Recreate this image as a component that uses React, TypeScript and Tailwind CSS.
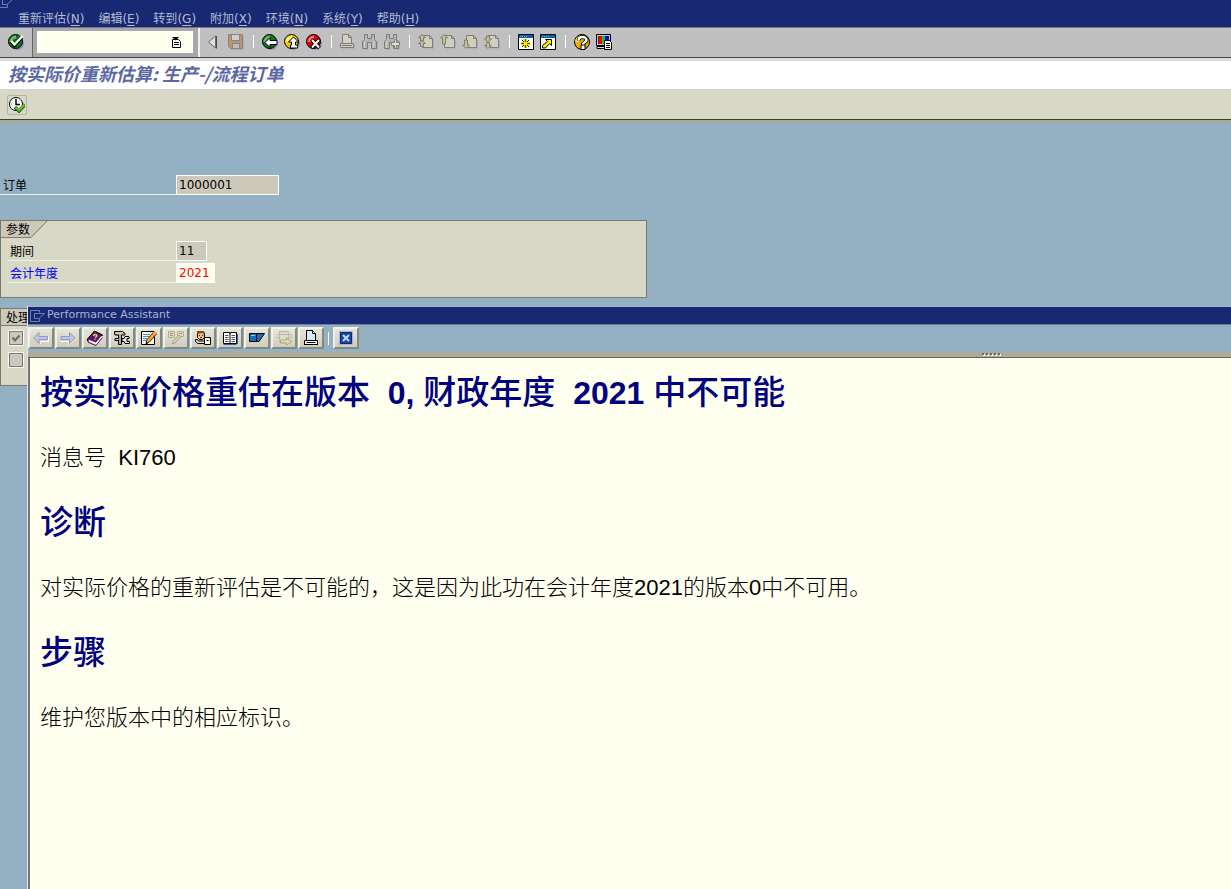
import type { ReactNode } from "react";

type IconProps = { children: ReactNode; className?: string };

function Icon({ children, className = "" }: IconProps) {
  return (
    <svg
      viewBox="0 0 16 16"
      className={`w-4 h-4 shrink-0 ${className}`}
      fill="none"
      aria-hidden="true"
    >
      {children}
    </svg>
  );
}

// ---------- Iconos redondos ----------

function Ball({ color, light, children }: { color: string; light: string; children: ReactNode }) {
  return (
    <Icon>
      <circle cx="9.5" cy="9.5" r="6.5" fill="#8f8fc4" />
      <circle cx="7.5" cy="7.5" r="7" fill={color} stroke="#000" />
      <path d="M3 8a5 5 0 0 1 5-5" stroke={light} strokeWidth="3" />
      {children}
    </Icon>
  );
}

const OkIcon = () => (
  <Ball color="#0f7a1c" light="#6fb56b">
    <path d="M3.5 7.5l3 3.5 7-7.5" stroke="#000" strokeWidth="4" />
    <path d="M3.5 7l3 3.5 8-8.5" stroke="#fff" strokeWidth="2.5" />
  </Ball>
);

const BackIcon = () => (
  <Ball color="#0f7a1c" light="#6fb56b">
    <path d="M3 8.5l5-5v3h7v4H8v3z" fill="#fff" stroke="#000" />
  </Ball>
);

const ExitIcon = () => (
  <Ball color="#f5c400" light="#fff27a">
    <path d="M9.5 3l5 5h-3v3h2v3h-7v-3h1V8h-3z" fill="#fff" stroke="#000" />
  </Ball>
);

const CancelIcon = () => (
  <Ball color="#e00000" light="#ff7070">
    <path d="M5.5 5.5l8 8.5M13.5 5.5l-8 8.5" stroke="#000" strokeWidth="4" />
    <path d="M6 6l7 7.5M13 6l-7 7.5" stroke="#fff" strokeWidth="2" />
  </Ball>
);

const HelpIcon = () => (
  <Icon>
    <circle cx="9" cy="9" r="6.5" fill="#8f8fc4" />
    <circle cx="8" cy="8" r="7.5" fill="#f5a800" stroke="#000" />
    <path d="M2.5 8a6 6 0 0 1 4-5" stroke="#fff27a" strokeWidth="3" />
    <path d="M4.5 6.5c0-4.5 8-4.5 8-.5 0 2.5-3.5 2-3.5 5" stroke="#000" strokeWidth="4" />
    <path d="M7 11h4v4.500H7z" fill="#fff" stroke="#000" />
    <path d="M4.5 6.5c0-4.5 8-4.5 8-.5 0 2.5-3.5 2-3.5 4.5" stroke="#fff" strokeWidth="2.5" />
  </Icon>
);

// ---------- Iconos de la barra ----------

const CollapseIcon = () => (
  <Icon>
    <path d="M10.5 2v12.5" stroke="#4a4a4a" />
    <path d="M9.5 2L2.5 8l7 6z" fill="#dedede" stroke="#6b6b6b" />
  </Icon>
);

const SaveIcon = () => (
  <Icon>
    <path d="M15.5 2v13.5H3" stroke="#aaaacb" />
    <path d="M.5.5h14v14H2.5l-2-2z" fill="#c09468" stroke="#858585" />
    <path d="M3.5.5h8v6h-8z" fill="#cfcfcb" stroke="#858585" />
    <path d="M4.5 9.5h7v5h-7z" fill="#bfbfbf" stroke="#858585" />
  </Icon>
);

const PrintGreyIcon = () => (
  <Icon>
    <path d="M14.5 11v4H2" stroke="#aaaacb" />
    <path d="M2.5.5h6l3 3v6h-9z" fill="#d4d1bd" stroke="#7c7c7c" />
    <path d="M8.5.5v3h3" stroke="#7c7c7c" />
    <path d="M.5 9.5h13v4H.5z" fill="#cfccb8" stroke="#7c7c7c" />
    <path d="M2 11.5h10" stroke="#7c7c7c" />
  </Icon>
);

const binoculars = (
  <>
    <path d="M15.5 6v9H10M5.5 15.5H2" stroke="#aaaacb" />
    <path
      d="M2.5.5h3v4h4v-4h3v5l2 2v7h-5v-6h-4v6h-5v-7l2-2z"
      fill="#b4b4ae"
      stroke="#7c7c7c"
    />
    <path d="M3 5h2M10 5h2M2.5 7.5v6M11.5 7.5v6" stroke="#d4d2c4" />
  </>
);

const FindIcon = () => <Icon>{binoculars}</Icon>;

const FindNextIcon = () => (
  <Icon>
    {binoculars}
    <path d="M10.5 5.5h2v3h3v3h-3v3h-2v-3h-3v-3h3z" fill="#e2dfc4" stroke="#7c7c7c" />
  </Icon>
);

function Page({ children }: { children: ReactNode }) {
  return (
    <Icon>
      <path d="M15.5 6v9H6" stroke="#aaaacb" />
      <path d="M4.5 1.5h7l3 3v9h-10z" fill="#d2cfbb" stroke="#7c7c7c" />
      <path d="M11.5 1.5v3h3" stroke="#7c7c7c" />
      {children}
    </Icon>
  );
}

const FirstPageIcon = () => (
  <Page>
    <path d="M4 .5l3.5 3h-2v3h-3v-3h-2z" fill="#c5c487" stroke="#7c7c7c" />
    <path d="M4 6.5l3.5 3h-2v3h-3v-3h-2z" fill="#c5c487" stroke="#7c7c7c" />
  </Page>
);

const PrevPageIcon = () => (
  <Page>
    <path d="M4 .5L7.5 4h-2v6h-3V4h-2z" fill="#c5c487" stroke="#7c7c7c" />
  </Page>
);

const NextPageIcon = () => (
  <Page>
    <path d="M4 14.5L.5 11h2V6h3v5h2z" fill="#c5c487" stroke="#7c7c7c" />
  </Page>
);

const LastPageIcon = () => (
  <Page>
    <path d="M4 8L.5 5h2V2h3v3h2z" fill="#c5c487" stroke="#7c7c7c" />
    <path d="M4 14.5l-3.5-3h2v-3h3v3h2z" fill="#c5c487" stroke="#7c7c7c" />
  </Page>
);

const windowFrame = (
  <>
    <path d="M.5.5h15v15H.5z" fill="#fffff0" stroke="#000" />
    <path d="M1 1h14v3H1z" fill="#0a5fa8" />
    <path d="M2 2.5h8" stroke="#6fb0dc" strokeDasharray="1 1" />
  </>
);

const NewSessionIcon = () => (
  <Icon>
    {windowFrame}
    <path d="M7.5 5v9M3 9.5h9" stroke="#e8d800" strokeWidth="3" />
    <path d="M4 6l7 7M11 6l-7 7" stroke="#000" />
    <path d="M7.5 5v3M7.5 11v3M3 9.5h3M9 9.5h3" stroke="#5c5600" />
    <path d="M6 8h3v3H6z" fill="#ffee00" />
  </Icon>
);

const ShortcutIcon = () => (
  <Icon>
    {windowFrame}
    <path d="M5.5 5.5h6v6l-2-2-4 4.5h-3v-2.5l5-4z" fill="#ffee00" stroke="#000" />
  </Icon>
);

const LayoutIcon = () => (
  <Icon>
    <path d="M.5.5h14v11H.5z" fill="#c8c8c8" stroke="#000" />
    <path d="M2 2h11v8H2z" fill="#333" />
    <path d="M3 2h3v8H3z" fill="#ff0000" />
    <path d="M6 2h3v8H6z" fill="#00cc33" />
    <path d="M9 2h4v8H9z" fill="#0000ee" />
    <path d="M1 12.5h8v2H1z" fill="#ddd" stroke="#000" />
    <path d="M8.5 6.5h5l2 2v7h-7z" fill="#fff" stroke="#000" />
    <path d="M10 9.5h4M10 11.5h4M10 13.5h4" stroke="#000" />
  </Icon>
);

const ExecuteIcon = () => (
  <Icon>
    <circle cx="7" cy="7" r="6.5" fill="#fff" stroke="#000" />
    <path d="M7 2v5.500h4" stroke="#000" strokeWidth="1.5" />
    <path d="M2 7h1M7 12v1M11 3l1-1" stroke="#888" />
    <path d="M6 10l4 4 6-6.5" stroke="#1d5c10" strokeWidth="3.5" />
    <path d="M6.5 10l3.5 3.5 5.5-6" stroke="#6cc132" strokeWidth="2" />
  </Icon>
);

const ListIcon = () => (
  <svg viewBox="0 0 9 11" className="w-[9px] h-[11px]" fill="none" aria-hidden="true">
    <path d="M.5 2.5h6l2 2v6h-8z" fill="#fff" stroke="#000" />
    <path d="M0 0h7L3.5 3.5z" fill="#000" />
    <path d="M2 5.5h5M2 7.5h5" stroke="#000" />
  </svg>
);

const DoorIcon = ({ className = "" }: { className?: string }) => (
  <svg viewBox="0 0 16 12" className={`w-4 h-3 ${className}`} fill="none" aria-hidden="true">
    <path d="M9.5.5h-9v11h9V9M9.5.5v2" stroke="#6f7fb4" />
    <path d="M4.5 3.5h10L9 8.5H4.5z" stroke="#6f7fb4" />
  </svg>
);

// ---------- Iconos del asistente ----------

const LeftIcon = () => (
  <Icon>
    <path d="M7 14.5l1-3h7.5v-5" stroke="#fff" />
    <path d="M.5 8L6 2.5v4h8.5v3H6v4z" fill="#bcc6e2" stroke="#9299c4" />
  </Icon>
);

const RightIcon = () => (
  <Icon>
    <path d="M1 11.5h8v3l6-6" stroke="#fff" />
    <path d="M15 8L9.5 2.5v4H1v3h8.500v4z" fill="#bcc6e2" stroke="#9299c4" />
  </Icon>
);

const BookIcon = () => (
  <Icon>
    <path d="M.5 9l7-8 8 4L9 13 .5 11z" fill="#5a1468" stroke="#000" />
    <path d="M1.5 10.5l7.5 3 6-7" stroke="#fff" strokeWidth="1.5" />
    <path d="M.5 10l1 2.5 7.5 3 6.5-8" stroke="#5a1468" />
    <path d="M6.5 6c.5-2.5 4.5-1.5 3 .5L8 7.5M7.5 9l1 .5" stroke="#f0d040" strokeWidth="1.5" />
  </Icon>
);

const ToolsIcon = () => (
  <Icon>
    <path d="M.5 3.5v-2h8l2.500 2V5H7.500v9.500h-3V5H1z" fill="#b8a888" stroke="#000" />
    <path d="M2 3h6" stroke="#e8e8e0" />
    <path
      d="M8 8.5h2l1-2h4v2h-2v3h2.5v2H11l-1-2H8zM4.5 8.5H1v2h3.5"
      fill="#e0e0e0"
      stroke="#000"
    />
  </Icon>
);

const EditIcon = () => (
  <Icon>
    <path d="M.5 1.5h13v13H.5z" fill="#fff" stroke="#000" />
    <path d="M2 4.5h7M2 6.5h6M2 8.5h4M2 10.5h3" stroke="#4a86c4" />
    <path d="M5 13.5l1-4 7-8L15.500 4l-7 8z" fill="#f2a020" stroke="#5c3500" />
    <path d="M12 2.500L14 1l2 2-1.500 1.500z" fill="#f0a0a0" />
    <path d="M4.500 14.500l1-3 1.500 2z" fill="#000" />
  </Icon>
);

const NotesIcon = () => (
  <Icon>
    <path d="M.5 1.5h6v6h-6zM9.5 1.5h6v5h-6z" fill="#dedcaa" stroke="#b0ae94" />
    <path d="M2 3.5h3M2 5.5h3M11 3.5h3" stroke="#96957c" />
    <path d="M4 14l1-3 6-6 2 2-6 6z" fill="#d8cbb4" stroke="#aaa490" />
  </Icon>
);

const SupportIcon = () => (
  <Icon>
    <path d="M2.5 1.5h6l1 2v4l-2 2h-3l-2-2z" fill="#f0c088" stroke="#000" />
    <path d="M2 4V1h7v3L7 3z" fill="#8a4a18" />
    <path d="M4 5.5h1M7 5.5h1M5 7.5h2" stroke="#5c2a00" />
    <path d="M.5 9.5h2l1 1.500h6v2.500H3l-2.500-2z" fill="#e8e4b8" stroke="#000" />
    <path d="M9.5 7.5h6v7h-6z" fill="#fffbd0" stroke="#000" />
    <path d="M11.5 10.5h2" stroke="#000" />
  </Icon>
);

const GlossaryIcon = () => (
  <Icon>
    <path d="M1.5 2.5h6l.5 1 .5-1h6v11h-13z" fill="#fff" stroke="#000" />
    <path d="M1.5 14.5h13M15.5 4v10" stroke="#2a63b8" />
    <path d="M8 3v11" stroke="#000" />
    <path
      d="M3 5.5h3.5M3 7.5h3.5M3 9.5h3.5M3 11.5h3.5M9.5 5.5H13M9.5 7.5H13M9.5 9.5H13M9.5 11.5H13"
      stroke="#555"
    />
  </Icon>
);

const DisplayIcon = () => (
  <Icon>
    <path d="M.5 3.5h7v8h-7z" fill="#1470bc" stroke="#000" />
    <path d="M7.5 3.5h8l-5.5 8H7.5z" fill="#1470bc" stroke="#000" />
    <path d="M2 5.5h4" stroke="#8cc8f0" />
  </Icon>
);

const TransferIcon = () => (
  <Icon>
    <path d="M3.5 1.5h9v11h-9z" fill="#dcdacc" stroke="#bdbbaa" />
    <path d="M.5 4.5h3v3h-3M12.5 4.5h3v3h-3M4 4.5h8" stroke="#bdbbaa" />
    <path d="M4.5 10h6V8l5 3.5-5 3.5v-2h-6z" fill="#e4dc9a" stroke="#a8a588" />
  </Icon>
);

const PrintIcon = () => (
  <Icon>
    <path d="M3.5.5h6l3 3v8h-9z" fill="#d6ecfa" stroke="#000" />
    <path d="M9.5.5v3h3" fill="#fff" stroke="#000" />
    <path d="M1.5 10.5h13v4h-13z" fill="#fff" stroke="#000" />
    <path d="M1 14.5h14M3.5 12.5h9" stroke="#000" />
  </Icon>
);

const CloseIcon = () => (
  <Icon>
    <path d="M1 1h14v14H1z" fill="#9db4e4" />
    <path d="M2.5 2.5h11v11h-11z" fill="#124a9c" stroke="#0a2a6a" />
    <path d="M5 5l6 6M11 5l-6 6" stroke="#c8d8fa" strokeWidth="2" />
  </Icon>
);

const menu = [
  ["重新评估", "N"],
  ["编辑", "E"],
  ["转到", "G"],
  ["附加", "X"],
  ["环境", "N"],
  ["系统", "Y"],
  ["帮助", "H"],
];

// null = separador
const tools: ([string, () => ReactNode] | null)[] = [
  ["保存", SaveIcon],
  null,
  ["返回", BackIcon],
  ["退出", ExitIcon],
  ["取消", CancelIcon],
  null,
  ["打印", PrintGreyIcon],
  ["查找", FindIcon],
  ["继续查找", FindNextIcon],
  null,
  ["第一页", FirstPageIcon],
  ["上一页", PrevPageIcon],
  ["下一页", NextPageIcon],
  ["最后一页", LastPageIcon],
  null,
  ["创建会话", NewSessionIcon],
  ["生成快捷方式", ShortcutIcon],
  null,
  ["帮助", HelpIcon],
  ["定制本地布局", LayoutIcon],
];

const assistantTools: [string, () => ReactNode][] = [
  ["后退", LeftIcon],
  ["前进", RightIcon],
  ["应用帮助", BookIcon],
  ["技术信息", ToolsIcon],
  ["编辑文档", EditIcon],
  ["注释", NotesIcon],
  ["支持", SupportIcon],
  ["词汇表", GlossaryIcon],
  ["显示", DisplayIcon],
  ["传输", TransferIcon],
  ["打印", PrintIcon],
];

function BevelButton({ label, children }: { label: string; children: ReactNode }) {
  return (
    <button
      aria-label={label}
      className="w-[26px] h-[22px] flex items-center justify-center border-2 border-t-[#f2f1e6] border-l-[#f2f1e6] border-b-[#88887c] border-r-[#88887c] bg-linear-to-b from-[#e6e5d8] to-[#cfcdbd]"
    >
      {children}
    </button>
  );
}

function GroupTab({ title }: { title: string }) {
  return (
    <div className="flex h-[17px]">
      <h2 className="pl-[5px] pr-px h-[17px] leading-4 bg-[#ccc9bb] border-b border-[#7b796e] whitespace-nowrap">
        {title}
      </h2>
      <svg viewBox="0 0 16 17" className="w-4 h-[17px] shrink-0" aria-hidden="true">
        <path d="M0 0h16L0 17z" fill="#ccc9bb" />
        <path d="M16 0L0 16.5" stroke="#7b796e" />
      </svg>
    </div>
  );
}

type FieldProps = {
  id: string;
  label: string;
  value: string;
  labelClass: string;
  inputClass: string;
};

function Field({ id, label, value, labelClass, inputClass }: FieldProps) {
  return (
    <div className="flex h-5">
      <label htmlFor={id} className={`h-5 leading-5 border-b border-[#f1efdf] ${labelClass}`}>
        {label}
      </label>
      <input
        id={id}
        defaultValue={value}
        className={`h-5 px-[2px] border border-white outline-none font-['DejaVu_Sans'] text-xs ${inputClass}`}
      />
    </div>
  );
}

function Tick({ label, checked = false }: { label: string; checked?: boolean }) {
  return (
    <span className="relative block w-[14px] h-[14px]">
      <input
        type="checkbox"
        aria-label={label}
        defaultChecked={checked}
        className="peer block appearance-none w-[14px] h-[14px] bg-[#ccc9bb] border border-[#7b796e] outline outline-white"
      />
      <svg
        viewBox="0 0 14 14"
        fill="none"
        aria-hidden="true"
        className="absolute inset-0 pointer-events-none invisible peer-checked:visible"
      >
        <path d="M3.5 6.5l2.5 3 4.5-5" stroke="#6b6a60" strokeWidth="2" />
      </svg>
    </span>
  );
}

function Heading({ children }: { children: ReactNode }) {
  return <h2 className="text-[33px] leading-10 font-medium text-[#000080]">{children}</h2>;
}

function Latin({ children }: { children: ReactNode }) {
  return <span className="text-[32px] font-bold">{children}</span>;
}

export default function App() {
  return (
    <div className="min-h-screen flex flex-col bg-[#94b0c3] text-black text-xs font-['Noto_Sans_CJK_SC',sans-serif]">
      {/* Menú */}
      <header className="relative h-[27px] bg-[#182873] text-[#b4bbd2] pt-[10px] pl-[18px]">
        <DoorIcon className="absolute -top-1 -left-0.5" />
        <nav className="flex gap-[14px] leading-4">
          {menu.map(([text, key]) => (
            <button key={text} className="leading-4 whitespace-nowrap">
              {text}
              <span className="font-['DejaVu_Sans']">
                (<u className="underline-offset-2">{key}</u>)
              </span>
            </button>
          ))}
        </nav>
      </header>

      {/* Barra de herramientas */}
      <div className="h-[31px] flex items-center bg-[#c0c0c0] border-t border-t-[#77777f] border-b border-b-[#44443f]">
        <div className="h-full w-[33px] pl-2 pb-[2px] flex items-center border-r border-[#66665f]">
          <button aria-label="回车">
            <OkIcon />
          </button>
        </div>
        <div className="h-full w-[167px] flex items-center pl-1 pb-px bg-[#a8a8a8] border-r-2 border-[#f0f0f0]">
          <div className="flex items-center w-[156px] h-[22px] pr-[11px] bg-[#fffff0] border border-white">
            <input aria-label="命令" className="min-w-0 flex-1 h-5 px-1 bg-transparent outline-none" />
            <button aria-label="历史">
              <ListIcon />
            </button>
          </div>
        </div>
        <div className="flex items-center gap-[6px] pl-[6px] pb-[2px]">
          <button aria-label="折叠">
            <CollapseIcon />
          </button>
          {tools.map((tool, i) => {
            if (!tool) {
              return (
                <span key={i} className="w-[6px] flex justify-center">
                  <span className="w-px h-[13px] bg-white" />
                </span>
              );
            }
            const [label, Glyph] = tool;
            return (
              <button key={i} aria-label={label}>
                <Glyph />
              </button>
            );
          })}
        </div>
      </div>

      <h1 className="h-8 pl-2 leading-6 bg-white border-t-3 border-t-[#dcdcdc] border-b border-b-[#d4d4d0] text-[18px] font-bold italic text-[#5b68a4]">
        按实际价重新估算: 生产-/流程订单
      </h1>

      <div className="h-[30px] pl-[7px] flex items-center bg-[#d8d8c6] border-b border-[#3f3f3a]">
        <button
          aria-label="执行"
          className="w-5 h-5 flex items-center justify-center border border-[#b4b4a4] rounded-xs"
        >
          <ExecuteIcon />
        </button>
      </div>
      <div className="h-[3px] bg-[#a9a999]" />

      <main className="flex-1 flex flex-col pt-[52px]">
        <Field
          id="order"
          label="订单"
          value="1000001"
          labelClass="w-44 pl-[3px]"
          inputClass="w-[103px] bg-[#ccc9bb]"
        />

        <section className="mt-[25px] w-[647px] max-w-full h-[78px] border border-[#7b796e] bg-[#d8d8c6]">
          <GroupTab title="参数" />
          <div className="flex flex-col gap-[2px] pt-[3px] pl-[7px]">
            <Field
              id="period"
              label="期间"
              value="11"
              labelClass="w-[168px] pl-[2px]"
              inputClass="w-[31px] bg-[#ccc9bb]"
            />
            <Field
              id="year"
              label="会计年度"
              value="2021"
              labelClass="w-[168px] pl-[2px] text-[#0000ff]"
              inputClass="w-[39px] bg-[#fffff0] text-[#ff0000]"
            />
          </div>
        </section>

        <div className="flex-1 flex mt-2">
          <div className="w-[27px] shrink-0 overflow-hidden pt-[2px]">
            <section className="h-[78px] border border-r-0 border-[#7b796e] bg-[#d8d8c6]">
              <GroupTab title="处理" />
              <div className="flex flex-col gap-2 pt-[5px] pl-2">
                <Tick label="后台处理" checked />
                <Tick label="测试运行" />
              </div>
            </section>
          </div>

          {/* Asistente */}
          <section className="flex-1 min-w-0 flex flex-col border-l border-[#dfe3ec]">
            <div className="h-[19px] flex items-center gap-px pl-[2px] bg-[#182873] border-t border-t-[#a9b0cc] border-b border-b-[#6a7f92] text-[#a9b3cf]">
              <DoorIcon />
              <h2 className="font-['DejaVu_Sans'] text-[11px]">Performance Assistant</h2>
            </div>
            <div className="h-[27px] flex items-start gap-px pt-[2px]">
              {assistantTools.map(([label, Glyph]) => (
                <BevelButton key={label} label={label}>
                  <Glyph />
                </BevelButton>
              ))}
              <span className="w-[7px] h-[22px] flex items-center justify-center">
                <span className="w-px h-[13px] bg-white" />
              </span>
              <BevelButton label="关闭">
                <CloseIcon />
              </BevelButton>
            </div>
            <div className="h-[6px] flex justify-end pr-[230px] pt-px bg-[#aeab9a] border-b border-[#66665f]">
              <svg viewBox="0 0 19 3" className="w-[19px] h-[3px]" aria-hidden="true">
                <path d="M1 2h18" stroke="#fff" strokeWidth="2" strokeDasharray="2 2" />
                <path d="M0 1h18" stroke="#66665f" strokeWidth="2" strokeDasharray="2 2" />
              </svg>
            </div>

            <article className="flex-1 flex flex-col gap-[33px] pt-[15px] pl-[10px] border-l-2 border-[#77756c] bg-[#fffff0] text-[22px] leading-6 font-light font-['Liberation_Sans','Noto_Sans_CJK_SC',sans-serif]">
              <Heading>
                按实际价格重估在版本
                <Latin>&nbsp;&nbsp;0,&nbsp;</Latin>
                财政年度
                <Latin>&nbsp;&nbsp;2021&nbsp;</Latin>
                中不可能
              </Heading>
              <p>消息号&nbsp;&nbsp;KI760</p>
              <Heading>诊断</Heading>
              <p>对实际价格的重新评估是不可能的，这是因为此功在会计年度2021的版本0中不可用。</p>
              <Heading>步骤</Heading>
              <p>维护您版本中的相应标识。</p>
            </article>
          </section>
        </div>
      </main>
    </div>
  );
}
